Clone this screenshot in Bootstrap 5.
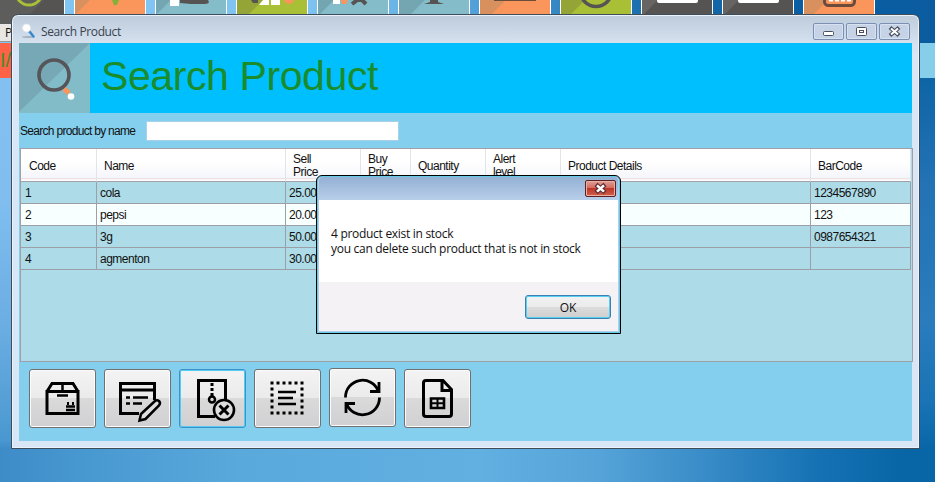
<!DOCTYPE html>
<html lang="en">
<head>
<meta charset="utf-8">
<title>Search Product</title>
<link href="https://cdn.jsdelivr.net/npm/bootstrap@5.3.0/dist/css/bootstrap.min.css" rel="stylesheet">
<style>
body{width:935px;height:482px;font-family:"Liberation Sans",Arial,sans-serif;font-size:12px;color:#111;
 background:linear-gradient(90deg,#7fc4f2 0,#7fc4f2 300px,#62aee2 430px,#3b8cc8 540px,#1c70b0 640px,#0a5fa2 780px,#0a5c9f 935px) top/935px 43px no-repeat,
 linear-gradient(180deg,#0a5c9f 0,#0e65a6 80px,#2272b4 180px,#2a7cbd 320px,#1a74b5 400px,#0866a7 449px) right top/20px 449px no-repeat,
 linear-gradient(180deg,#84c2f3 0,#80bef0 200px,#6aade2 330px,#4a98d0 440px,#3d8cc8 449px) left top/14px 449px no-repeat,
 linear-gradient(90deg,#3d8cc8 0,#4a9ad2 100px,#5aa9dc 240px,#62b0e2 480px,#55a3d8 600px,#3a8dc8 700px,#1571b3 820px,#0866a7 900px,#0866a7 935px)}
.ui-text{letter-spacing:-.5px}
.search-row.ui-text{letter-spacing:-.7px}
.tile-strip{left:-7px;top:0;height:14px;gap:9px}
.tile{width:72px;height:14px;border:solid #fff;border-width:0 1px}
.tile svg{display:block}
.tile-dark{height:24px}
.behind-label{left:0;top:24px;width:14px;height:18px;background:#e9e7e4;border-bottom:1px solid #999;font:12px/17px "Open Sans",sans-serif;padding-left:5px}
.behind-red{left:0;top:43px;width:14px;height:35px;background:#ff6347;color:#4f8a26;font-size:20px;line-height:35px}
.behind-sky{left:919px;top:43px;width:16px;height:35px;background:#87ceeb}
.app-window{left:11px;top:14px;width:909px;height:435px;border:1px solid #3f4c5a;border-radius:7px 7px 0 0;background:linear-gradient(#bdcbdb 0,#d4e0ee 27px,#d8e6f6 40px);box-shadow:inset 0 0 0 1px #eaf3fc;padding:0 7px 7px}
.title-row{height:28px;font:12px "Open Sans",sans-serif;color:#38424d;padding:4px 2px 0 2px}
.title-text{letter-spacing:-.38px;margin-left:4px}
.win-btn{width:31px;height:17px;border:1px solid #7b8eb4;border-radius:2px;background:#c6d3e6;box-shadow:inset 0 0 0 1px #d7e2f0}
.win-btn svg{display:block}
.client{height:398px;background:#84ceee}
.hero{height:70px;background:#00bfff}
.hero-title{font-size:41px;line-height:66px;color:#1a8c2c;margin-left:11px;letter-spacing:-.4px}
.search-row{height:35px;padding-left:1px}
.search-box{width:253px;height:20px;border:1px solid #a5d2ea;background:#fff;margin-left:11px}
.grid-box{margin-left:1px;width:893px;height:214px;border:1px solid #a09fa8;background:#addbe7}
.stock{width:890px;table-layout:fixed;border-collapse:separate;border-spacing:0}
.stock th{height:33px;font-weight:400;line-height:13px;padding:2px 0 0 7px;vertical-align:middle;border-right:1px solid #e3e3ea;border-bottom:1px solid #a09fa8;background:linear-gradient(#fff 0,#fff 40%,#f5f6fb 90%,#efdfe3 92%,#fff 97%)}
.stock th:first-child{padding-left:8px}
.stock td{height:22px;line-height:15px;padding:1px 0 0 3px;border-right:1px solid #9c9fa8;border-bottom:1px solid #9c9fa8}
.stock td:first-child{padding-left:4px}
.stock .alt td{background:#f8ffff}
.tool-row{gap:8px;padding:7px 0 0 10px}
.tool{width:67px;height:59px;padding:0;border:1px solid #707070;border-radius:3px;background:linear-gradient(#f3f3f3 0,#ebebeb 49%,#dadadb 50%,#d0cfd1 100%);box-shadow:inset 0 0 0 1px #fbfbfb}
.tool svg{display:block}
.tool.is-hot{border-color:#3a94c8;box-shadow:inset 0 0 0 1px #55cbf4}
.tool.lift{margin-top:-1px;margin-bottom:1px}
.msg{left:316px;top:175px;width:305px;height:159px;border:1px solid #000;border-radius:6px 6px 0 0;background:#b4cde8;padding:1px;box-shadow:inset 0 0 0 1px #63cbe8}
.msg-bar{height:23px;margin:0 1px;background:linear-gradient(#93b0d3,#b8cfea);border-radius:4px 4px 0 0;padding:3px 2px 0 0}
.msg-close{width:31px;height:17px;border:1px solid #5b2222;border-radius:2px;background:linear-gradient(#e0a095 0,#d2695c 48%,#bd3526 50%,#d0614d 100%);box-shadow:inset 0 0 0 1px #e9afa5}
.msg-close svg{display:block}
.msg-body{height:82px;margin:0 1px;background:#fff;font:12px/15px "Open Sans",sans-serif;padding:26px 0 0 12px;letter-spacing:-.29px}
.msg-foot{height:49px;margin:0 1px;background:#f5f2f6;padding:13px 7px 0 0}
.ok-btn{width:86px;height:24px;border:1px solid #3c7fb1;border-radius:3px;background:linear-gradient(#f2f2f2 0,#ebebeb 49%,#dcdcdc 50%,#cfcfcf 100%);box-shadow:inset 0 0 0 1px #55cff2;font:12px "Open Sans",sans-serif;padding:0;color:#111}
</style>
<script src="https://cdn.jsdelivr.net/npm/bootstrap@5.3.0/dist/js/bootstrap.bundle.min.js"></script>
</head>
<body class="position-relative overflow-hidden m-0">
<div class="tile-strip position-absolute d-flex">
 <div class="tile tile-dark"><svg width="70" height="24"><path fill="#555453" d="M0 0h70v24H0z"/><path fill="#666564" d="M0 0h50L26 24H0z" opacity=".5"/><circle cx="35" cy="-8" r="13" fill="none" stroke="#a9bf36" stroke-width="3"/></svg></div>
 <div class="tile"><svg width="70" height="14"><path fill="#fa965b" d="M0 0h70v14H0z"/><path fill="#d9905f" d="M0 0h15L1 14H0z"/><path fill="#84b03a" d="M37 0h7l-2 5h-3z"/></svg></div>
 <div class="tile"><svg width="70" height="14"><path fill="#84bcc9" d="M0 0h70v14H0z"/><path fill="#74a6b2" d="M0 0h15L1 14H0z"/><path fill="#fff" d="M14 0h9v6h-9z"/><path fill="#555453" d="M24 0h28q3 4-4 4H35l-11-1z"/></svg></div>
 <div class="tile"><svg width="70" height="14"><path fill="#a9bf36" d="M0 0h70v14H0z"/><path fill="#94a436" d="M0 0h26L12 14H0z"/><path fill="#555453" d="M14 0h7v3h-5z"/><path fill="#fff" d="M26 0h6v5H22zM34 0h9v5h-9z"/><circle cx="52" cy="-1" r="5" fill="#fa965b"/></svg></div>
 <div class="tile"><svg width="70" height="14"><path fill="#84bcc9" d="M0 0h70v14H0z"/><path fill="#74a6b2" d="M0 0h16L2 14H0z"/><path fill="#fff" d="M15 0h7v4h-7z"/><path fill="#fa965b" d="M23 0h7l-2 4h-4z"/><path fill="none" stroke="#555453" stroke-width="4" d="M34 4l8-6 6 6M39 0l9-3"/></svg></div>
 <div class="tile"><svg width="70" height="14"><path fill="#84bcc9" d="M0 0h70v14H0z"/><path fill="#74a6b2" d="M0 0h26L12 14H0z"/><path fill="#555453" d="M31 0h8v2l6 2H25l6-2z"/></svg></div>
 <div class="tile"><svg width="70" height="14"><path fill="#fa965b" d="M0 0h70v14H0z"/><path fill="#d9905f" d="M0 0h26L12 14H0z"/><path fill="#6b4b3a" d="M14 0h42v1H14z"/></svg></div>
 <div class="tile"><svg width="70" height="14"><path fill="#a9bf36" d="M0 0h70v14H0z"/><path fill="#94a436" d="M0 0h24L10 14H0z"/><circle cx="35" cy="-9" r="15.500" fill="none" stroke="#555453" stroke-width="3.500"/></svg></div>
 <div class="tile"><svg width="70" height="14"><path fill="#555453" d="M0 0h70v14H0z"/><path fill="#666564" d="M0 0h16L2 14H0z"/><rect x="15" y="-5" width="41" height="8" rx="2" fill="#fff"/></svg></div>
 <div class="tile"><svg width="70" height="14"><path fill="#555453" d="M0 0h70v14H0z"/><path fill="#666564" d="M0 0h16L2 14H0z"/><rect x="15" y="-5" width="41" height="8" rx="2" fill="#fff"/></svg></div>
 <div class="tile"><svg width="70" height="14"><path fill="#fa965b" d="M0 0h70v14H0z"/><path fill="#d9905f" d="M0 0h24L10 14H0z"/><rect x="20.500" y="-14" width="30" height="19.500" rx="4" fill="none" stroke="#6b4b3a" stroke-width="3"/><path stroke="#fff" stroke-width="3" stroke-dasharray="4 2" d="M25 0h22"/></svg></div>
</div>
<div class="behind-label position-absolute">P</div>
<div class="behind-red position-absolute">I/</div>
<div class="behind-sky position-absolute"></div>

<main class="app-window position-absolute">
 <header class="title-row d-flex align-items-start">
  <svg width="16" height="18" viewBox="0 0 16 18" class="mt-1"><ellipse cx="7" cy="14" rx="6" ry="1" fill="#a8b3c0"/><path stroke="#3889cb" stroke-width="2.500" stroke-linecap="round" d="M8.500 8.500l4 5"/><circle cx="5.500" cy="5" r="4" fill="#fff" stroke="#e5e9ee"/></svg>
  <span class="title-text pt-1">Search Product</span>
  <div class="d-flex ms-auto pt-1" style="gap:2px">
   <span class="win-btn"><svg width="29" height="15"><rect x="9.500" y="7.500" width="10" height="4" rx="1" fill="#fff" stroke="#4a4f5c"/></svg></span>
   <span class="win-btn"><svg width="29" height="15"><rect x="9.500" y="3.500" width="10" height="8" rx="1" fill="#fff" stroke="#4a4f5c"/><rect x="12.500" y="6.500" width="4" height="2" fill="#fff" stroke="#4a4f5c"/></svg></span>
   <span class="win-btn"><svg width="29" height="15"><path d="M10 3.500l9 8M19 3.500l-9 8" stroke="#4a4f5c" stroke-width="4"/><path d="M11 4.400l7 6.200M18 4.400l-7 6.200" stroke="#fff" stroke-width="2"/></svg></span>
  </div>
 </header>
 <div class="client">
  <div class="hero d-flex">
   <svg width="71" height="70"><path fill="#82bcc9" d="M0 0h71v70H0z"/><path fill="#76a8b5" d="M0 0h71L0 69z"/><circle cx="35" cy="32" r="15" fill="none" stroke="#55555a" stroke-width="3.600"/><path stroke="#fa965b" stroke-width="5" d="M45 46l5 4"/><circle cx="52" cy="53.500" r="3.300" fill="#fff"/></svg>
   <h1 class="hero-title mb-0 fw-normal">Search Product</h1>
  </div>
  <div class="search-row d-flex align-items-center ui-text">
   <label for="q">Search product by name</label><input id="q" class="search-box">
  </div>
  <div class="grid-box">
   <table class="stock ui-text">
    <colgroup><col style="width:76px"><col style="width:189px"><col style="width:75px"><col style="width:50px"><col style="width:75px"><col style="width:75px"><col style="width:250px"><col style="width:100px"></colgroup>
    <thead><tr><th>Code</th><th>Name</th><th>Sell<br>Price</th><th>Buy<br>Price</th><th>Quantity</th><th>Alert<br>level</th><th>Product Details</th><th>BarCode</th></tr></thead>
    <tbody>
     <tr><td>1</td><td>cola</td><td>25.00</td><td></td><td></td><td></td><td></td><td>1234567890</td></tr>
     <tr class="alt"><td>2</td><td>pepsi</td><td>20.00</td><td></td><td></td><td></td><td></td><td>123</td></tr>
     <tr><td>3</td><td>3g</td><td>50.00</td><td></td><td></td><td></td><td></td><td>0987654321</td></tr>
     <tr><td>4</td><td>agmenton</td><td>30.00</td><td></td><td></td><td></td><td></td><td></td></tr>
    </tbody>
   </table>
  </div>
  <div class="tool-row d-flex">
   <button class="tool" aria-label="Add"><svg width="65" height="57" fill="none" stroke="#000" stroke-width="3"><path d="M17 21.500h31V43.500H17zM17 21.500l5-8h21l5 8"/><path stroke-width="2.500" d="M32.500 13v8M27 25.500h11M36 40h9M36 36.500h9"/><path stroke-width="2" d="M38 32v3M43 32v3"/></svg></button>
   <button class="tool" aria-label="Edit"><svg width="65" height="57" fill="none" stroke="#000" stroke-width="3"><path d="M34 43.500H15.500v-30h34V30M15.500 20h34"/><path stroke-width="2.600" d="M21 27.500h4M28 27.500h15M21 33.500h4M28 33.500h9"/><path fill="#dedede" stroke-width="2.500" d="M34.500 50.500l1.500-6.500 14-13q2-1.500 4 0 2 2 0 4.500L40.500 49z"/></svg></button>
   <button class="tool is-hot" aria-label="Delete"><svg width="65" height="57" fill="none" stroke="#000" stroke-width="3"><path d="M35 46.500H18.500v-36h27V33"/><path stroke-dasharray="3 2" d="M32 13v14"/><circle cx="32" cy="29.500" r="3" stroke-width="2.500"/><circle cx="44" cy="40" r="10" fill="#dedede" stroke-width="2.600"/><path d="M39.500 35.500l9 9M48.500 35.500l-9 9"/></svg></button>
   <button class="tool" aria-label="Select all"><svg width="65" height="57" fill="none" stroke="#000"><path stroke-width="3" stroke-dasharray="3 3" d="M15.500 13h34M15.500 43h34M17 17.500v24M47 17.500v24"/><path stroke-width="2.600" d="M23 22h18M23 28h15M23 34h18"/></svg></button>
   <button class="tool lift" aria-label="Refresh"><svg width="65" height="57" fill="none" stroke="#000" stroke-width="2.800"><path d="M15.500 28.500a17 17 0 0 1 33-6M49.500 28.500a17 17 0 0 1-33 6M49 13v9.500H40M16 44v-9.500h9"/></svg></button>
   <button class="tool" aria-label="Report"><svg width="65" height="57" fill="none" stroke="#000" stroke-width="3"><path d="M21 10.500h17l8.500 9V44q0 2.500-2.500 2.500H21q-2.500 0-2.500-2.500V13q0-2.500 2.500-2.500zM37 11v9.500h9"/><path stroke-width="2.600" d="M26 28.500h13v9.500H26z"/><path stroke-width="2" d="M26 33.200h13M32.500 28v10"/></svg></button>
  </div>
 </div>
</main>

<section class="msg position-absolute" role="dialog">
 <div class="msg-bar d-flex justify-content-end"><span class="msg-close"><svg width="29" height="15"><path d="M10 3.500l9 8M19 3.500l-9 8" stroke="#5b2d35" stroke-width="4.500"/><path d="M11 4.400l7 6.200M18 4.400l-7 6.200" stroke="#fff" stroke-width="2.600"/></svg></span></div>
 <div class="msg-body">4 product exist in stock<br>you can delete such product that is not in stock</div>
 <div class="msg-foot d-flex justify-content-end"><button class="ok-btn">OK</button></div>
</section>
</body>
</html>
